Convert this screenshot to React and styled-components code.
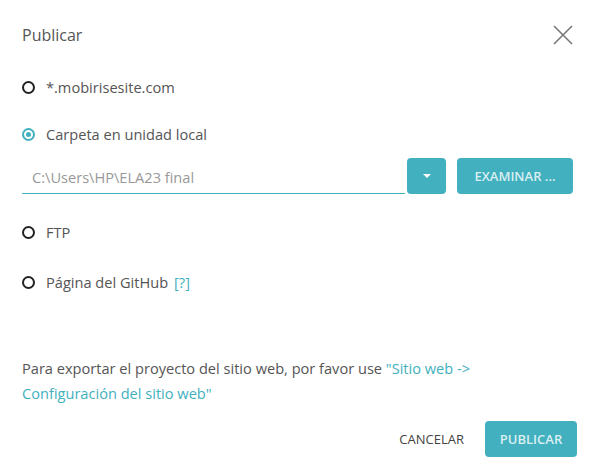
import React from 'react'
import styled, { createGlobalStyle } from 'styled-components'

const teal = '#42b0be'

const GlobalStyle = createGlobalStyle`
  html, body {
    margin: 0;
    padding: 0;
    background: #fff;
  }
  body {
    font-family: "Open Sans", Lato, sans-serif;
  }
`

const Dialog = styled.div`
  width: 595px;
  height: 476px;
  box-sizing: border-box;
  padding: 0 22px 19px;
  display: flex;
  flex-direction: column;
  background: #fff;
  color: #555;
`

const Header = styled.div`
  height: 70px;
  display: flex;
  align-items: center;
  justify-content: space-between;
`

const Title = styled.h1`
  margin: 0;
  font-size: 16px;
  font-weight: 400;
  color: #555;
`

const CloseButton = styled.button`
  border: 0;
  background: none;
  padding: 0;
  width: 20px;
  height: 20px;
  cursor: pointer;
  display: flex;
`

const Body = styled.div`
  padding-top: 7px;
  display: flex;
  flex-direction: column;
`

const Option = styled.label`
  display: flex;
  align-items: center;
  height: 20px;
  margin-top: ${p => p.$gap || 0}px;
  font-size: 14.6px;
  color: #555;
  cursor: pointer;
`

const Radio = styled.span`
  width: 13px;
  height: 13px;
  box-sizing: border-box;
  border-radius: 50%;
  border: 2px solid ${p => (p.$checked ? teal : '#222')};
  margin-right: 11px;
  display: flex;
  align-items: center;
  justify-content: center;
  &::after {
    content: '';
    display: ${p => (p.$checked ? 'block' : 'none')};
    width: 5px;
    height: 5px;
    border-radius: 50%;
    background: ${teal};
  }
`

const Help = styled.span`
  color: ${teal};
  margin-left: 6px;
`

const PathRow = styled.div`
  display: flex;
  align-items: stretch;
  height: 36px;
  margin-top: 14px;
`

const PathInput = styled.input`
  width: 383px;
  box-sizing: border-box;
  border: 0;
  border-bottom: 1px solid ${teal};
  padding: 3px 10px 0;
  font-family: inherit;
  font-size: 14.6px;
  color: #999;
  outline: none;
  background: transparent;
`

const TealButton = styled.button`
  border: 0;
  border-radius: 4px;
  background: ${teal};
  color: #d9eff2;
  font-family: inherit;
  font-size: 13px;
  font-weight: 600;
  text-transform: uppercase;
  padding: 0 12px;
  margin-left: ${p => p.$gap || 0}px;
  width: ${p => (p.$w ? `${p.$w}px` : 'auto')};
  height: 36px;
  display: flex;
  align-items: center;
  justify-content: center;
  cursor: pointer;
`

const Caret = styled.span`
  width: 0;
  height: 0;
  border-left: 4px solid transparent;
  border-right: 4px solid transparent;
  border-top: 4px solid #fff;
`

const Note = styled.p`
  margin: auto 0 0;
  font-size: 14.6px;
  line-height: 25px;
  color: #555;
`

const Link = styled.a`
  color: ${teal};
  text-decoration: none;
`

const Footer = styled.div`
  display: flex;
  justify-content: flex-end;
  align-items: center;
  gap: 21px;
  margin: 15px -4px 0 0;
  height: 36px;
`

const TextButton = styled.button`
  border: 0;
  background: none;
  padding: 0;
  font-family: inherit;
  font-size: 13px;
  color: #444;
  text-transform: uppercase;
  cursor: pointer;
`

export default function App() {
  return (
    <>
      <GlobalStyle />
      <Dialog>
        <Header>
          <Title>Publicar</Title>
          <CloseButton aria-label="close">
            <svg width="20" height="20" viewBox="0 0 20 20">
              <path d="M1 1 L19 19 M19 1 L1 19" stroke="#777" strokeWidth="1.6" fill="none" />
            </svg>
          </CloseButton>
        </Header>
        <Body>
          <Option>
            <Radio />
            *.mobirisesite.com
          </Option>
          <Option $gap={27}>
            <Radio $checked />
            Carpeta en unidad local
          </Option>
          <PathRow>
            <PathInput defaultValue="C:\Users\HP\ELA23 final" />
            <TealButton $gap={2} $w={39}>
              <Caret />
            </TealButton>
            <TealButton $gap={11} $w={116}>Examinar ...</TealButton>
          </PathRow>
          <Option $gap={28}>
            <Radio />
            FTP
          </Option>
          <Option $gap={30}>
            <Radio />
            Página del GitHub <Help>[?]</Help>
          </Option>
        </Body>
        <Note>
          Para exportar el proyecto del sitio web, por favor use{' '}
          <Link href="#">
            "Sitio web -&gt;
            <br />
            Configuración del sitio web"
          </Link>
        </Note>
        <Footer>
          <TextButton>Cancelar</TextButton>
          <TealButton $w={92}>Publicar</TealButton>
        </Footer>
      </Dialog>
    </>
  )
}
